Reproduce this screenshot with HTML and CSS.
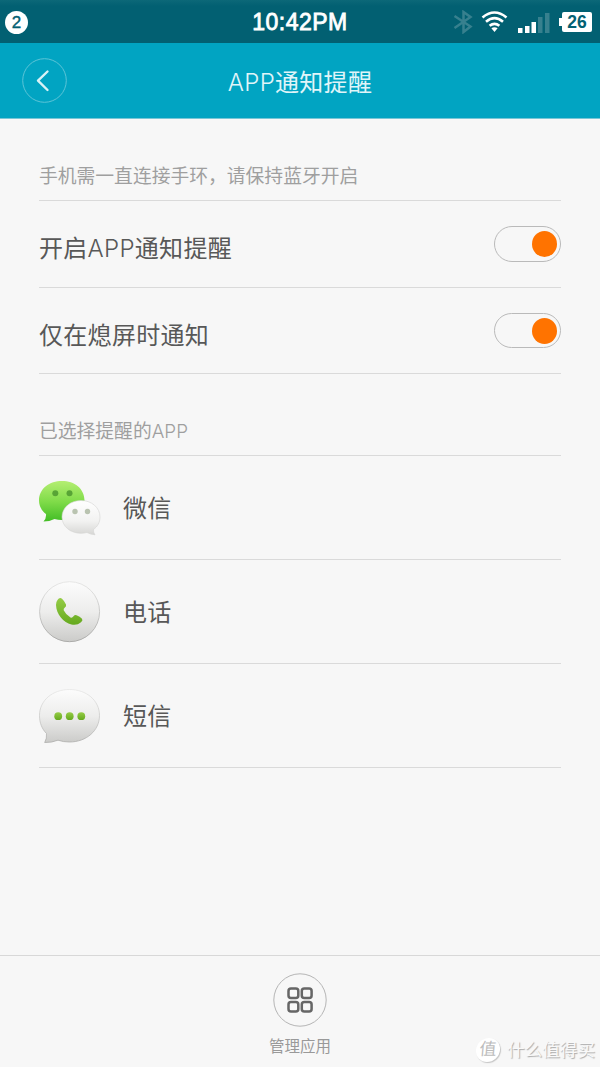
FILE: index.html
```html
<!DOCTYPE html>
<html lang="zh-CN">

<head>
    <meta charset="UTF-8">
    <meta name="viewport" content="width=device-width, initial-scale=1">
    <title>APP通知提醒</title>
    <link rel="stylesheet" href="styles.css">
</head>

<body>
    <!-- status bar -->
    <div class="status-bar">
        <div class="badge">2</div>
        <div class="clock">10:42PM</div>
        <div class="status-icons">
            <svg class="bluetooth" width="20" height="24" viewBox="0 0 20 24">
                <path d="M1.500 6L17.500 16.500L10.500 22V2L17.500 7L1.500 18" />
            </svg>
            <svg class="wifi" width="27" height="22" viewBox="0 0 27 22">
                <path d="M1.500 6.500Q13.500 -3.500 25.500 6.500M5 10.800Q13.500 3.600 22 10.800M8.600 14.800Q13.500 10.800 18.400 14.800" />
                <path class="fill" d="M10.400 17.300Q13.500 15.200 16.600 17.300L13.500 21Z" />
            </svg>
            <svg class="signal" width="32" height="21" viewBox="0 0 32 21">
                <path d="M0 16h4.500v5H0zM7 14h4.500v7H7zM13.500 10h4.500v11h-4.500z" />
                <path class="off" d="M20 5h4.500v16H20zM27 1h4.500v20H27z" />
            </svg>
            <div class="battery">26</div>
        </div>
    </div>

    <!-- title bar -->
    <div class="header">
        <div class="back">
            <svg width="45" height="45" viewBox="0 0 45 45">
                <circle cx="22.500" cy="22.500" r="21.800" />
                <path d="M25.500 13.500L16 22.700L25.500 32" />
            </svg>
        </div>
        <div class="title"><span class="latin">APP</span>通知提醒</div>
    </div>

    <!-- settings -->
    <div class="content">
        <div class="label">手机需一直连接手环，请保持蓝牙开启</div>
        <div class="row">
            <div class="text">开启<span class="latin">APP</span>通知提醒</div>
            <div class="switch"><div class="knob"></div></div>
        </div>
        <div class="row second">
            <div class="text">仅在熄屏时通知</div>
            <div class="switch"><div class="knob"></div></div>
        </div>

        <!-- selected apps -->
        <div class="label">已选择提醒的<span class="latin">APP</span></div>
        <div class="row app">
            <svg class="icon" width="62" height="64" viewBox="0 0 62 64">
                <defs>
                    <linearGradient id="green" x1="0" y1="0" x2="0" y2="1">
                        <stop offset="0" stop-color="#b4ee72" />
                        <stop offset="0.500" stop-color="#81dc4a" />
                        <stop offset="1" stop-color="#42bd25" />
                    </linearGradient>
                    <linearGradient id="white" x1="0" y1="0" x2="0" y2="1">
                        <stop offset="0" stop-color="#ffffff" />
                        <stop offset="0.600" stop-color="#f2f2f1" />
                        <stop offset="1" stop-color="#d6d6d4" />
                    </linearGradient>
                </defs>
                <path fill="url(#green)" d="M23 5C35.500 5 45.500 12.500 45.500 24.500C45.500 36 35.500 44 23 44Q19 44 15.500 43Q10.500 45.500 4.500 45.500Q7.500 42 7 38C2.500 34.500 0 30 0 24.500C0 12.500 10.500 5 23 5Z" />
                <circle fill="#58a436" cx="16.300" cy="17.300" r="3" />
                <circle fill="#58a436" cx="30.500" cy="17.300" r="3" />
                <path fill="url(#white)" stroke="#d4d4d2" stroke-width="0.600" d="M42 24.500C52.500 24.500 61 31.500 61 41C61 46.500 58.500 50.500 54.500 53.500Q54 56 56 58.800Q51.500 58.500 48 56.500Q45 57.300 42 57.300C31.500 57.300 23 50.500 23 41C23 31.500 31.500 24.500 42 24.500Z" />
                <circle fill="#b9c3b0" cx="36" cy="35.500" r="2.700" />
                <circle fill="#b9c3b0" cx="48.500" cy="35.500" r="2.700" />
            </svg>
            <div class="text">微信</div>
        </div>
        <div class="row app">
            <svg class="icon" width="62" height="64" viewBox="0 0 62 64">
                <defs>
                    <linearGradient id="ball" x1="0" y1="0" x2="0" y2="1">
                        <stop offset="0" stop-color="#fcfcfc" />
                        <stop offset="0.500" stop-color="#ededec" />
                        <stop offset="1" stop-color="#cbcbc9" />
                    </linearGradient>
                    <linearGradient id="edge" x1="0" y1="0" x2="0" y2="1">
                        <stop offset="0" stop-color="#e4e4e3" />
                        <stop offset="1" stop-color="#a5a5a3" />
                    </linearGradient>
                    <linearGradient id="leaf" x1="0" y1="0" x2="0" y2="1">
                        <stop offset="0" stop-color="#95cc46" />
                        <stop offset="1" stop-color="#65a91e" />
                    </linearGradient>
                </defs>
                <circle cx="30.600" cy="31.700" r="30" fill="url(#ball)" stroke="url(#edge)" stroke-width="0.900" />
                <path fill="url(#leaf)" d="M18.500 20Q20.500 17 23 18.700Q25.500 21 27 24.500Q27.600 26.300 25.900 27.500Q24.300 28.700 24.700 30.200Q27 35 31.500 37.500Q33.200 38.200 34.500 36.300Q35.700 34.700 37.500 35.200Q41 36.300 43 38.800Q44.300 40.500 42 42.300Q38 45.800 32.500 44.500C24.500 42.500 17.300 34.500 17 25Q16.900 22 18.500 20Z" />
            </svg>
            <div class="text">电话</div>
        </div>
        <div class="row app">
            <svg class="icon" width="62" height="64" viewBox="0 0 62 64">
                <path fill="url(#ball)" stroke="url(#edge)" stroke-width="0.700" d="M30.500 5.500C47.500 5.500 60.500 16.500 60.500 31.500C60.500 46.500 47.500 58 30.500 58Q24 58 19 56.200Q12.500 58.800 5.700 58.500Q8 54.500 7.500 49.500C3 45 0.500 39 0.500 31.500C0.500 16.500 13.500 5.500 30.500 5.500Z" />
                <circle fill="url(#leaf)" cx="19.200" cy="32.200" r="3.900" />
                <circle fill="url(#leaf)" cx="30.700" cy="32.200" r="3.900" />
                <circle fill="url(#leaf)" cx="42.300" cy="32.200" r="3.900" />
            </svg>
            <div class="text">短信</div>
        </div>
    </div>

    <!-- bottom bar -->
    <div class="footer">
        <svg class="manage" width="54" height="54" viewBox="0 0 54 54">
            <circle cx="27" cy="27" r="26.200" />
            <rect x="15.500" y="15.500" width="9.800" height="9.600" rx="2.500" />
            <rect x="28.800" y="15.500" width="9.800" height="9.600" rx="2.500" />
            <rect x="15.500" y="28.900" width="9.800" height="9.600" rx="2.500" />
            <rect x="28.800" y="28.900" width="9.800" height="9.600" rx="2.500" />
        </svg>
        <div class="manage-text">管理应用</div>
    </div>

    <!-- watermark over the bottom bar -->
    <div class="watermark">
        <div class="mark">值</div>
        <div>什么值得买</div>
    </div>
</body>

</html>
```
FILE: styles.css
```css
* {
    box-sizing: border-box;
}

body {
    margin: 0px;
    height: 1067px;
    display: flex;
    flex-direction: column;
    position: relative;
    overflow: hidden;
    background-color: #f7f7f7;
    font-family: "Liberation Sans", "Noto Sans CJK SC", sans-serif;
}

svg {
    display: block;
    flex-shrink: 0;
}

.status-bar {
    height: 43px;
    display: grid;
    grid-template-columns: 1fr auto 1fr;
    align-items: center;
    padding: 0 8px 0 5px;
    background: linear-gradient(#0c6878, #026072 6px);
    color: white;
}

.badge {
    width: 23px;
    height: 23px;
    border-radius: 50%;
    background-color: white;
    color: #026072;
    font-size: 17px;
    line-height: 23px;
    text-align: center;
    -webkit-text-stroke: 0.4px #026072;
}

.clock {
    font-size: 23px;
    letter-spacing: 0.5px;
    line-height: 44px;
    padding-left: 3px;
    -webkit-text-stroke: 0.8px white;
}

.status-icons {
    display: flex;
    justify-content: flex-end;
    align-items: center;
}

.bluetooth {
    fill: none;
    stroke: #37808e;
    stroke-width: 2.5;
    margin-right: 8px;
}

.wifi {
    fill: none;
    stroke: white;
    stroke-width: 2.6;
    margin-right: 10px;
}

.wifi .fill {
    fill: white;
    stroke: none;
}

.signal {
    fill: white;
    margin-right: 12px;
}

.signal .off {
    fill: #37808e;
}

.battery {
    position: relative;
    width: 30px;
    height: 20px;
    border-radius: 2px;
    background-color: white;
    color: #026072;
    font-size: 17.5px;
    font-weight: bold;
    line-height: 21px;
    text-align: center;
}

.battery::before {
    content: "";
    position: absolute;
    left: -3px;
    top: 6px;
    width: 3px;
    height: 8px;
    background-color: white;
}

.header {
    height: 76px;
    display: grid;
    grid-template-columns: 1fr auto 1fr;
    align-items: center;
    padding: 0 22px;
    background-color: #01a4c2;
    border-bottom: 1px solid #78c6d6;
}

.back svg {
    fill: none;
}

.back circle {
    stroke: #5cc4d7;
    stroke-width: 1;
}

.back path {
    stroke: #d9f2f6;
    stroke-width: 2.4;
    stroke-linecap: round;
    stroke-linejoin: round;
}

.title {
    color: #e0f5f9;
    font-family: Inter, "Noto Sans CJK SC", sans-serif;
    font-size: 24px;
    letter-spacing: 0.3px;
    line-height: 36px;
    padding-top: 4px;
}

.latin {
    font-weight: 300;
}

.content {
    flex: 1;
    padding: 0 39px;
}

.label {
    height: 82px;
    padding-top: 44px;
    border-bottom: 1px solid #dadada;
    color: #9f9f9f;
    font-family: Inter, "Noto Sans CJK SC", sans-serif;
    font-size: 18.8px;
    line-height: 28px;
}

.row {
    height: 87px;
    display: flex;
    justify-content: space-between;
    align-items: center;
    border-bottom: 1px solid #dadada;
    color: #585858;
}

.second {
    height: 86px;
}

.text {
    font-family: Inter, "Noto Sans CJK SC", sans-serif;
    font-size: 24px;
    letter-spacing: 0.3px;
    line-height: 36px;
    padding-top: 10px;
}

.switch {
    width: 67px;
    height: 36px;
    display: flex;
    justify-content: flex-end;
    align-items: center;
    padding-right: 3px;
    border: 1px solid #bababa;
    border-radius: 18px;
}

.second .switch {
    height: 35px;
}

.knob {
    width: 25px;
    height: 26px;
    border-radius: 50%;
    background-color: #ff7300;
}

.app {
    height: 104px;
    justify-content: flex-start;
}

.app .text {
    margin-left: 22px;
    padding-top: 2px;
}

.footer {
    height: 112px;
    display: flex;
    flex-direction: column;
    align-items: center;
    padding-top: 17px;
    border-top: 1px solid #d8d8d8;
}

.manage {
    fill: none;
    stroke: #666666;
    stroke-width: 2.5;
}

.manage circle {
    stroke: #b5b5b5;
    stroke-width: 1;
}

.manage-text {
    margin-top: 8px;
    color: #999999;
    font-size: 15.5px;
    line-height: 23px;
}

.watermark {
    position: absolute;
    right: 5px;
    bottom: 4px;
    display: flex;
    align-items: center;
    gap: 7px;
    color: #f9f9f9;
    font-size: 17.6px;
    line-height: 26px;
    text-shadow: 1px 1px 1px #aaaaaa;
}

.mark {
    width: 24px;
    height: 24px;
    border-radius: 50%;
    background-color: white;
    box-shadow: 1px 1px 1px #c4c4c4;
    color: #bcbcbc;
    font-size: 17px;
    line-height: 24px;
    text-align: center;
    text-shadow: none;
    transform: skewX(-5deg);
}
```
